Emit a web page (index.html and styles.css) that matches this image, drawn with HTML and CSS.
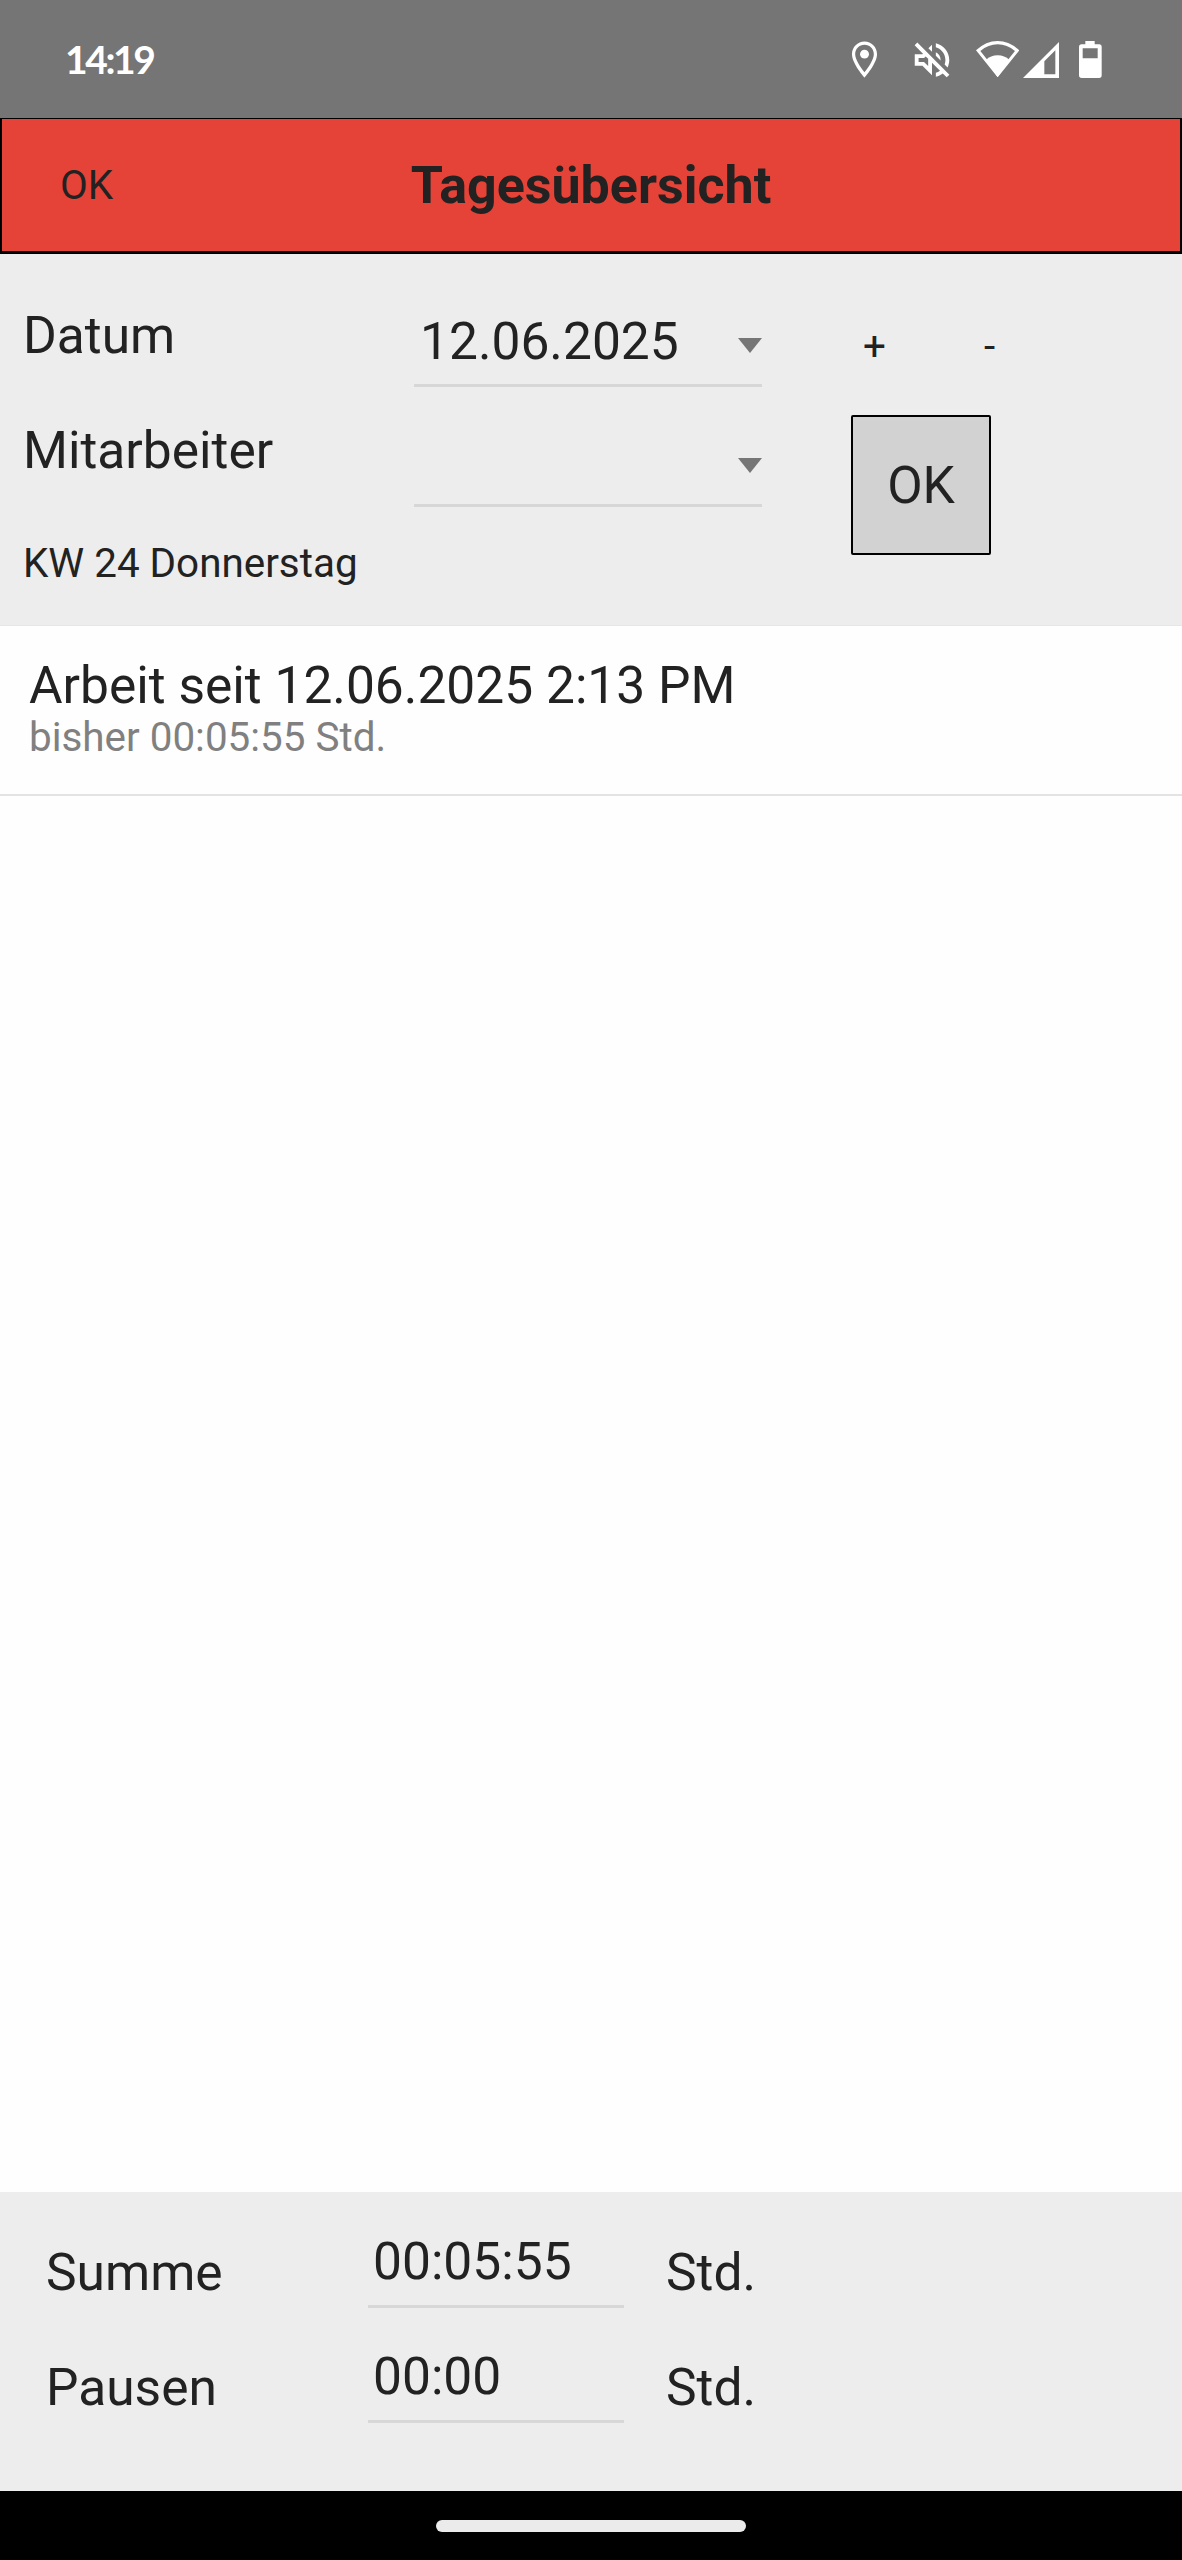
FILE: index.html
```html
<!DOCTYPE html>
<html lang="de">
	<head>
		<meta charset="UTF-8">
		<title>Tagesübersicht</title>
		<link rel="stylesheet" href="styles.css">
	</head>
	<body>
		<div class="statusBar">
			<span class="clock">14:19</span>
			<div class="statusIcons">
				<svg class="iconPin" viewBox="0 0 24 24"><path d="M12 2C8.130 2 5 5.130 5 9c0 5.250 7 13 7 13s7-7.750 7-13c0-3.870-3.130-7-7-7zM6.800 9c0-2.900 2.300-5.200 5.200-5.200s5.200 2.300 5.200 5.200c0 2.880-2.880 7.190-5.200 10.100C9.720 16.210 6.800 11.850 6.800 9z"/><circle cx="12" cy="9" r="2.5"/></svg>
				<svg class="iconMute" viewBox="0 0 24 24"><path d="M4.340 2.930L2.930 4.340 7.290 8.700 7 9H3v6h4l5 5v-6.590l4.180 4.180c-.65.49-1.380.88-2.180 1.110v2.060c1.340-.3 2.570-.92 3.610-1.750l2.050 2.050 1.410-1.410L4.340 2.930zM10 15.170L7.830 13H5v-2h2.830l.88-.88L10 11.410v3.760zM19 12c0 .82-.15 1.610-.41 2.340l1.530 1.530c.56-1.170.88-2.480.88-3.870 0-4.280-2.990-7.860-7-8.770v2.060c2.890.86 5 3.540 5 6.710zm-7-8l-1.880 1.880L12 7.760zm4.500 8c0-1.770-1.020-3.290-2.500-4.030v1.790l2.480 2.480c.01-.08.02-.16.02-.24z"/></svg>
				<svg class="iconWifi" viewBox="0 0 130 109"><path fill-rule="evenodd" d="M65 109L0 28Q30 0 65 0T130 28ZM65 95L117 30Q93 10 65 10T13 30Z"/><path d="M65 108L30 57Q44 43 65 43T100 57Z"/></svg>
				<svg class="iconSignal" viewBox="0 0 108 108"><path fill-rule="evenodd" d="M0 108L108 0V108ZM64 58V97H97V25Z"/></svg>
				<svg class="iconBattery" viewBox="0 0 68 111"><path fill-rule="evenodd" d="M19 0H47V10H60Q68 10 68 18V103Q68 111 60 111H8Q0 111 0 103V18Q0 10 8 10H19ZM11 22V52H56V22Z"/></svg>
			</div>
		</div>

		<div class="header">
			<span class="headerOk">OK</span>
			<h1 class="headerTitle">Tagesübersicht</h1>
		</div>

		<div class="filter">
			<div class="filterLabels">
				<div class="label">Datum</div>
				<div class="label">Mitarbeiter</div>
				<div class="weekday">KW 24 Donnerstag</div>
			</div>
			<div class="filterFields">
				<div class="select">
					<span>12.06.2025</span>
					<svg class="arrow" viewBox="0 0 24 15"><path d="M0 0H24L12 15Z"/></svg>
				</div>
				<div class="select">
					<span></span>
					<svg class="arrow" viewBox="0 0 24 15"><path d="M0 0H24L12 15Z"/></svg>
				</div>
			</div>
			<div class="filterButtons">
				<div class="steps">
					<span class="step">+</span>
					<span class="step">-</span>
				</div>
				<div class="okButton">OK</div>
			</div>
		</div>

		<div class="list">
			<div class="entry">
				<div class="entryTitle">Arbeit seit 12.06.2025 2:13 PM</div>
				<div class="entrySub">bisher 00:05:55 Std.</div>
			</div>
		</div>

		<div class="totals">
			<div class="totalRow">
				<span class="totalLabel">Summe</span>
				<span class="totalValue">00:05:55</span>
				<span class="totalUnit">Std.</span>
			</div>
			<div class="totalRow">
				<span class="totalLabel">Pausen</span>
				<span class="totalValue">00:00</span>
				<span class="totalUnit">Std.</span>
			</div>
		</div>

		<div class="navBar"><div class="navHandle"></div></div>
	</body>
</html>
```
FILE: styles.css
```css
* {
	box-sizing: border-box;
}
body {
	margin: 0;
	height: 2560px;
	display: flex;
	flex-direction: column;
	background: #fefefe;
	color: #222;
	font-family: Roboto, sans-serif;
	font-size: 51.5px;
	line-height: 60px;
}

/* system bar */
.statusBar {
	height: 118px;
	padding: 0 80px 0 65px;
	display: flex;
	align-items: center;
	justify-content: space-between;
	background: #757575;
	color: #fff;
}
.clock {
	font-family: Lato, sans-serif;
	font-size: 39px;
	font-weight: bold;
	letter-spacing: -2.4px;
}
.statusIcons {
	display: flex;
	align-items: center;
	fill: #fff;
}
.iconPin {
	width: 43px;
	height: 43px;
}
.iconMute {
	width: 46px;
	height: 46px;
	margin: 2px 21px 0 23px;
}
.iconWifi {
	width: 43.3px;
	height: 36.3px;
}
.iconSignal {
	width: 36px;
	height: 36px;
	margin: 1px 20.5px 0 4px;
}
.iconBattery {
	width: 22.7px;
	height: 37px;
}

.header {
	height: 136px;
	padding-top: 2px;
	display: grid;
	grid-template-columns: 1fr auto 1fr;
	align-items: center;
	background: #e64338;
	border: 2px solid #000;
	border-top-width: 1px;
	border-bottom-width: 3px;
}
.headerOk {
	padding-left: 58px;
	font-size: 40.4px;
}
.headerTitle {
	margin: 0;
	font-size: 52px;
	font-weight: bold;
}

/* date and employee */
.filter {
	height: 372px;
	display: flex;
	background: #ededed;
	border-bottom: 1px solid #e6e6e6;
}
.filterLabels {
	width: 414px;
	padding: 52px 0 0 23px;
}
.label {
	margin-bottom: 55px;
}
.weekday {
	margin-top: 59px;
	font-size: 40.4px;
	line-height: 48px;
}
.filterFields {
	width: 348px;
	padding-top: 57px;
}
.select {
	height: 76px;
	margin-bottom: 44px;
	padding: 1px 0 0 6px;
	display: flex;
	justify-content: space-between;
	border-bottom: 3px solid #d7d7d7;
}
.arrow {
	width: 24px;
	height: 15px;
	margin-top: 26px;
	fill: #767676;
}
.filterButtons {
	margin-left: 55px;
	padding-top: 69px;
}
.steps {
	display: flex;
}
.step {
	width: 115px;
	text-align: center;
	font-size: 40.4px;
	line-height: 48px;
}
.okButton {
	width: 140px;
	height: 140px;
	margin: 44px 0 0 34px;
	padding-top: 1px;
	display: flex;
	align-items: center;
	justify-content: center;
	background: #d2d2d2;
	border: 2px solid #000;
	border-radius: 2px;
}

.list {
	flex: 1;
}
.entry {
	height: 170px;
	padding: 30px 0 0 29px;
	border-bottom: 2px solid #e3e3e3;
}
.entrySub {
	margin-top: -2px;
	font-size: 40.4px;
	line-height: 48px;
	color: #808080;
}

/* sums at the bottom */
.totals {
	height: 299px;
	padding-top: 39px;
	background: #ededed;
}
.totalRow {
	height: 115px;
	padding-left: 46px;
	display: flex;
	align-items: flex-start;
}
.totalLabel {
	width: 322px;
	padding-top: 12px;
}
.totalValue {
	width: 256px;
	height: 77px;
	padding: 1px 0 0 5px;
	border-bottom: 3px solid #d7d7d7;
}
.totalUnit {
	padding: 12px 0 0 42px;
}

.navBar {
	height: 69px;
	display: flex;
	align-items: center;
	justify-content: center;
	background: #000;
}
.navHandle {
	width: 310px;
	height: 12px;
	border-radius: 6px;
	background: #ebebeb;
}
```
